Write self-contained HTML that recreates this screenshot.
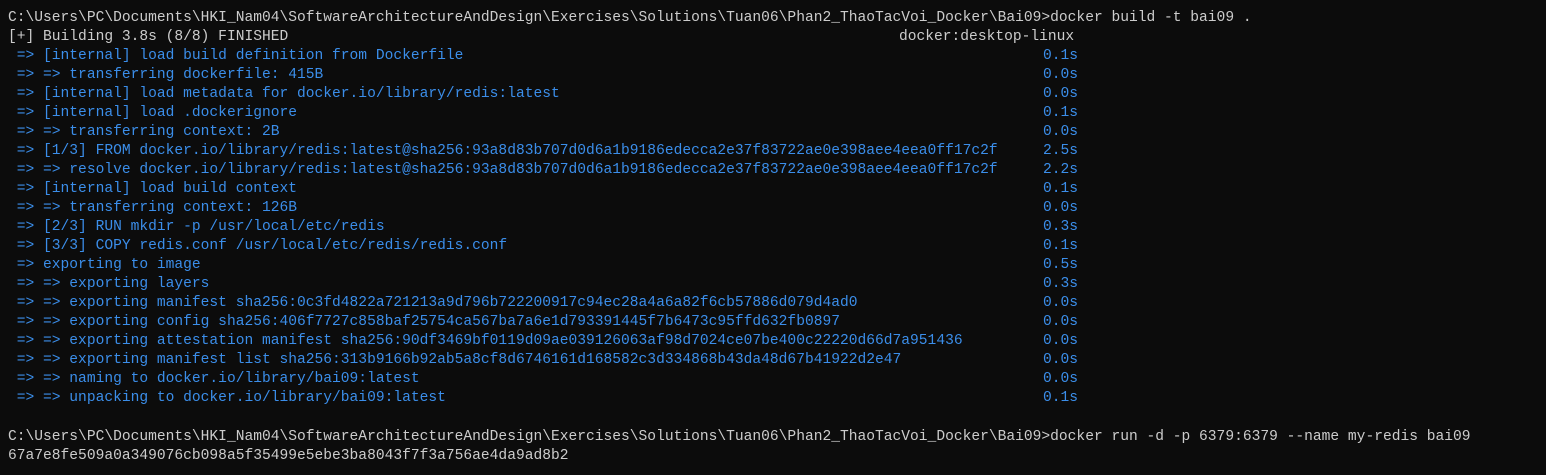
<!DOCTYPE html>
<html><head><meta charset="utf-8"><style>
html,body{margin:0;padding:0;background:#0c0c0c;width:1546px;height:475px;overflow:hidden}
.t{position:absolute;left:8px;top:8.5px;font-family:"Liberation Mono",monospace;font-size:14.6px;line-height:19.05px;color:#cccccc;white-space:normal}
.l{position:relative;height:19.05px;white-space:pre}
.b{color:#3b8eea}
.r{position:absolute;left:1035px;top:0}
.d{position:absolute;left:891px;top:0}
</style></head><body><div class="t"><div class="l">C:\Users\PC\Documents\HKI_Nam04\SoftwareArchitectureAndDesign\Exercises\Solutions\Tuan06\Phan2_ThaoTacVoi_Docker\Bai09&gt;docker build -t bai09 .</div><div class="l">[+] Building 3.8s (8/8) FINISHED<span class="d">docker:desktop-linux</span></div><div class="l b"> =&gt; [internal] load build definition from Dockerfile<span class="r">0.1s</span></div><div class="l b"> =&gt; =&gt; transferring dockerfile: 415B<span class="r">0.0s</span></div><div class="l b"> =&gt; [internal] load metadata for docker.io/library/redis:latest<span class="r">0.0s</span></div><div class="l b"> =&gt; [internal] load .dockerignore<span class="r">0.1s</span></div><div class="l b"> =&gt; =&gt; transferring context: 2B<span class="r">0.0s</span></div><div class="l b"> =&gt; [1/3] FROM docker.io/library/redis:latest@sha256:93a8d83b707d0d6a1b9186edecca2e37f83722ae0e398aee4eea0ff17c2f<span class="r">2.5s</span></div><div class="l b"> =&gt; =&gt; resolve docker.io/library/redis:latest@sha256:93a8d83b707d0d6a1b9186edecca2e37f83722ae0e398aee4eea0ff17c2f<span class="r">2.2s</span></div><div class="l b"> =&gt; [internal] load build context<span class="r">0.1s</span></div><div class="l b"> =&gt; =&gt; transferring context: 126B<span class="r">0.0s</span></div><div class="l b"> =&gt; [2/3] RUN mkdir -p /usr/local/etc/redis<span class="r">0.3s</span></div><div class="l b"> =&gt; [3/3] COPY redis.conf /usr/local/etc/redis/redis.conf<span class="r">0.1s</span></div><div class="l b"> =&gt; exporting to image<span class="r">0.5s</span></div><div class="l b"> =&gt; =&gt; exporting layers<span class="r">0.3s</span></div><div class="l b"> =&gt; =&gt; exporting manifest sha256:0c3fd4822a721213a9d796b722200917c94ec28a4a6a82f6cb57886d079d4ad0<span class="r">0.0s</span></div><div class="l b"> =&gt; =&gt; exporting config sha256:406f7727c858baf25754ca567ba7a6e1d793391445f7b6473c95ffd632fb0897<span class="r">0.0s</span></div><div class="l b"> =&gt; =&gt; exporting attestation manifest sha256:90df3469bf0119d09ae039126063af98d7024ce07be400c22220d66d7a951436<span class="r">0.0s</span></div><div class="l b"> =&gt; =&gt; exporting manifest list sha256:313b9166b92ab5a8cf8d6746161d168582c3d334868b43da48d67b41922d2e47<span class="r">0.0s</span></div><div class="l b"> =&gt; =&gt; naming to docker.io/library/bai09:latest<span class="r">0.0s</span></div><div class="l b"> =&gt; =&gt; unpacking to docker.io/library/bai09:latest<span class="r">0.1s</span></div><div class="l"> </div><div class="l">C:\Users\PC\Documents\HKI_Nam04\SoftwareArchitectureAndDesign\Exercises\Solutions\Tuan06\Phan2_ThaoTacVoi_Docker\Bai09&gt;docker run -d -p 6379:6379 --name my-redis bai09</div><div class="l">67a7e8fe509a0a349076cb098a5f35499e5ebe3ba8043f7f3a756ae4da9ad8b2</div></div></body></html>
